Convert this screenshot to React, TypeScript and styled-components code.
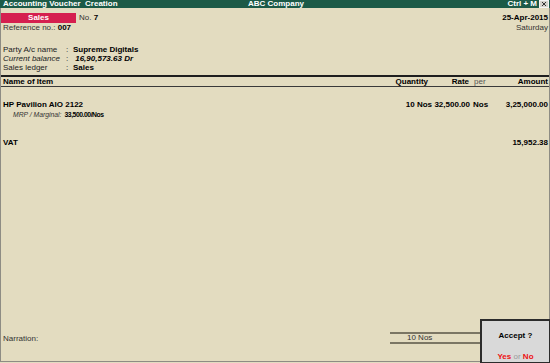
import React from "react";
import styled, { createGlobalStyle } from "styled-components";

const GlobalStyle = createGlobalStyle`
  html, body {
    margin: 0;
    padding: 0;
  }
  body {
    width: 550px;
    height: 363px;
    overflow: hidden;
    background: #e3dcc0;
    font-family: "Liberation Sans", Arial, sans-serif;
    font-size: 8px;
    color: #111;
  }
`;

const Screen = styled.div`
  position: relative;
  width: 550px;
  height: 363px;
  display: flex;
  flex-direction: column;
  background: #e3dcc0;
`;

const TitleBar = styled.div`
  height: 8px;
  display: grid;
  grid-template-columns: 1fr auto 1fr;
  align-items: center;
  padding: 0 1px 0 3px;
  background: #1c5a47;
  color: #fff;
  font-weight: bold;
  font-size: 8px;
  line-height: 8px;
  white-space: pre;
`;

const TitleRight = styled.div`
  display: flex;
  justify-content: flex-end;
  align-items: center;
  gap: 2px;
`;

const Panel = styled.div`
  flex: 1;
  display: flex;
  flex-direction: column;
  margin-bottom: 1px;
  border-left: 1px solid #8e8c84;
  border-right: 1px solid #8e8c84;
  border-bottom: 1px solid #8e8c84;
`;

const Head = styled.div`
  padding: 5px 1px 0 2px;
`;

const HeadRow = styled.div<{ $h: number }>`
  height: ${p => p.$h}px;
  line-height: ${p => p.$h}px;
  display: flex;
  align-items: center;
  justify-content: space-between;
`;

const Group = styled.div`
  display: flex;
  align-items: center;
`;

const Badge = styled.div`
  width: 75px;
  height: 10px;
  margin-left: -2px;
  margin-right: 3px;
  background: #d51f4f;
  color: #fff;
  font-weight: bold;
  text-align: center;
  line-height: 10px;
`;

const B = styled.b`
  color: #000;
`;

const Muted = styled.span`
  color: #333;
`;

const PartyBlock = styled.div`
  margin-top: 13px;
  display: grid;
  grid-template-columns: 63px 7px 1fr;
  grid-auto-rows: 9px;
  line-height: 9px;
  color: #222;
`;

const PartyLabel = styled.div<{ $italic?: boolean }>`
  font-style: ${p => (p.$italic ? "italic" : "normal")};
`;

const PartyValue = styled.div<{ $italic?: boolean }>`
  font-weight: bold;
  color: #000;
  font-style: ${p => (p.$italic ? "italic" : "normal")};
  white-space: pre;
`;

const ItemGrid = styled.div`
  display: grid;
  grid-template-columns: 1fr 50px 38px 20px 58px;
  padding: 0 1px 0 2px;
  align-items: center;
`;

const TableHead = styled(ItemGrid)`
  margin-top: 3px;
  height: 9px;
  line-height: 9px;
  border-top: 2px solid #1e1e1e;
  border-bottom: 1px solid #3a3a3a;
  font-weight: bold;
  color: #000;
`;

const Cell = styled.div<{ $right?: boolean; $pad?: number; $light?: boolean }>`
  text-align: ${p => (p.$right ? "right" : "left")};
  padding-left: ${p => (p.$right ? 0 : p.$pad ?? 0)}px;
  padding-right: ${p => (p.$right ? p.$pad ?? 0 : 0)}px;
  font-weight: ${p => (p.$light ? "normal" : "bold")};
  color: ${p => (p.$light ? "#555" : "#000")};
  white-space: nowrap;
`;

const Body = styled.div`
  flex: 1;
  padding-top: 13px;
`;

const ItemRow = styled(ItemGrid)<{ $gap?: number }>`
  height: 10px;
  line-height: 10px;
  margin-top: ${p => p.$gap ?? 0}px;
`;

const SubRow = styled.div`
  height: 10px;
  line-height: 10px;
  padding-left: 12px;
  font-size: 6.8px;
`;

const SubLabel = styled.span`
  font-style: italic;
  color: #333;
  margin-right: 3px;
`;

const SubValue = styled.span`
  font-weight: bold;
  color: #000;
  letter-spacing: -0.45px;
`;

const Footer = styled.div`
  height: 12px;
  margin-bottom: 17px;
  display: flex;
  align-items: center;
  justify-content: space-between;
  padding-left: 2px;
`;

const TotalBox = styled.div`
  width: 142px;
  height: 8px;
  line-height: 8px;
  border-top: 2px solid #7b7664;
  border-bottom: 2px solid #7b7664;
  padding-left: 17px;
  color: #333;
`;

const Dialog = styled.div`
  position: absolute;
  right: 0;
  bottom: 0;
  width: 70px;
  height: 44px;
  box-sizing: border-box;
  background: #d9d9d9;
  border: 2px solid #2c2c2c;
  border-right-width: 1px;
  border-bottom-width: 1px;
  text-align: center;
`;

const DialogTitle = styled.div`
  margin-top: 10px;
  height: 10px;
  line-height: 10px;
  font-weight: bold;
  color: #000;
`;

const DialogChoice = styled.div`
  margin-top: 11px;
  height: 10px;
  line-height: 10px;
`;

const Pick = styled.span<{ $key?: boolean }>`
  font-weight: ${p => (p.$key ? "bold" : "normal")};
  color: ${p => (p.$key ? "#ee1111" : "#9a9a9a")};
`;

const CloseIcon = () => (
  <svg width="10" height="8" viewBox="0 0 10 8">
    <rect x="0.5" y="0.5" width="9" height="7" fill="#d6d3cc" stroke="#f4f4f4" />
    <path d="M3 2 L7 6 M7 2 L3 6" stroke="#333" strokeWidth="1" />
  </svg>
);

const App = () => {
  return (
    <>
      <GlobalStyle />
      <Screen>
        <TitleBar>
          <span>Accounting Voucher  Creation</span>
          <span>ABC Company</span>
          <TitleRight>
            <span>Ctrl + M</span>
            <CloseIcon />
          </TitleRight>
        </TitleBar>

        <Panel>
          <Head>
            <HeadRow $h={10}>
              <Group>
                <Badge>Sales</Badge>
                <Muted>No.&nbsp;</Muted>
                <B>7</B>
              </Group>
              <B>25-Apr-2015</B>
            </HeadRow>
            <HeadRow $h={9}>
              <Group>
                <Muted>Reference no.:&nbsp;</Muted>
                <B>007</B>
              </Group>
              <Muted>Saturday</Muted>
            </HeadRow>

            <PartyBlock>
              <PartyLabel>Party A/c name</PartyLabel>
              <div>:</div>
              <PartyValue>Supreme Digitals</PartyValue>
              <PartyLabel $italic>Current balance</PartyLabel>
              <div>:</div>
              <PartyValue $italic> 16,90,573.63 Dr</PartyValue>
              <PartyLabel>Sales ledger</PartyLabel>
              <div>:</div>
              <PartyValue>Sales</PartyValue>
            </PartyBlock>
          </Head>

          <TableHead>
            <Cell>Name of Item</Cell>
            <Cell $right $pad={4}>Quantity</Cell>
            <Cell $right $pad={1}>Rate</Cell>
            <Cell $pad={4} $light>per</Cell>
            <Cell $right>Amount</Cell>
          </TableHead>

          <Body>
            <ItemRow>
              <Cell>HP Pavilion AIO 2122</Cell>
              <Cell $right>10 Nos</Cell>
              <Cell $right>32,500.00</Cell>
              <Cell $pad={3}>Nos</Cell>
              <Cell $right>3,25,000.00</Cell>
            </ItemRow>
            <SubRow>
              <SubLabel>MRP / Marginal:</SubLabel>
              <SubValue>33,500.00/Nos</SubValue>
            </SubRow>
            <ItemRow $gap={18}>
              <Cell>VAT</Cell>
              <Cell />
              <Cell />
              <Cell />
              <Cell $right>15,952.38</Cell>
            </ItemRow>
          </Body>

          <Footer>
            <Muted>Narration:</Muted>
            <TotalBox>10 Nos</TotalBox>
          </Footer>
        </Panel>

        <Dialog>
          <DialogTitle>Accept ?</DialogTitle>
          <DialogChoice>
            <Pick $key>Yes</Pick> <Pick>or</Pick> <Pick $key>No</Pick>
          </DialogChoice>
        </Dialog>
      </Screen>
    </>
  );
};

export default App;
